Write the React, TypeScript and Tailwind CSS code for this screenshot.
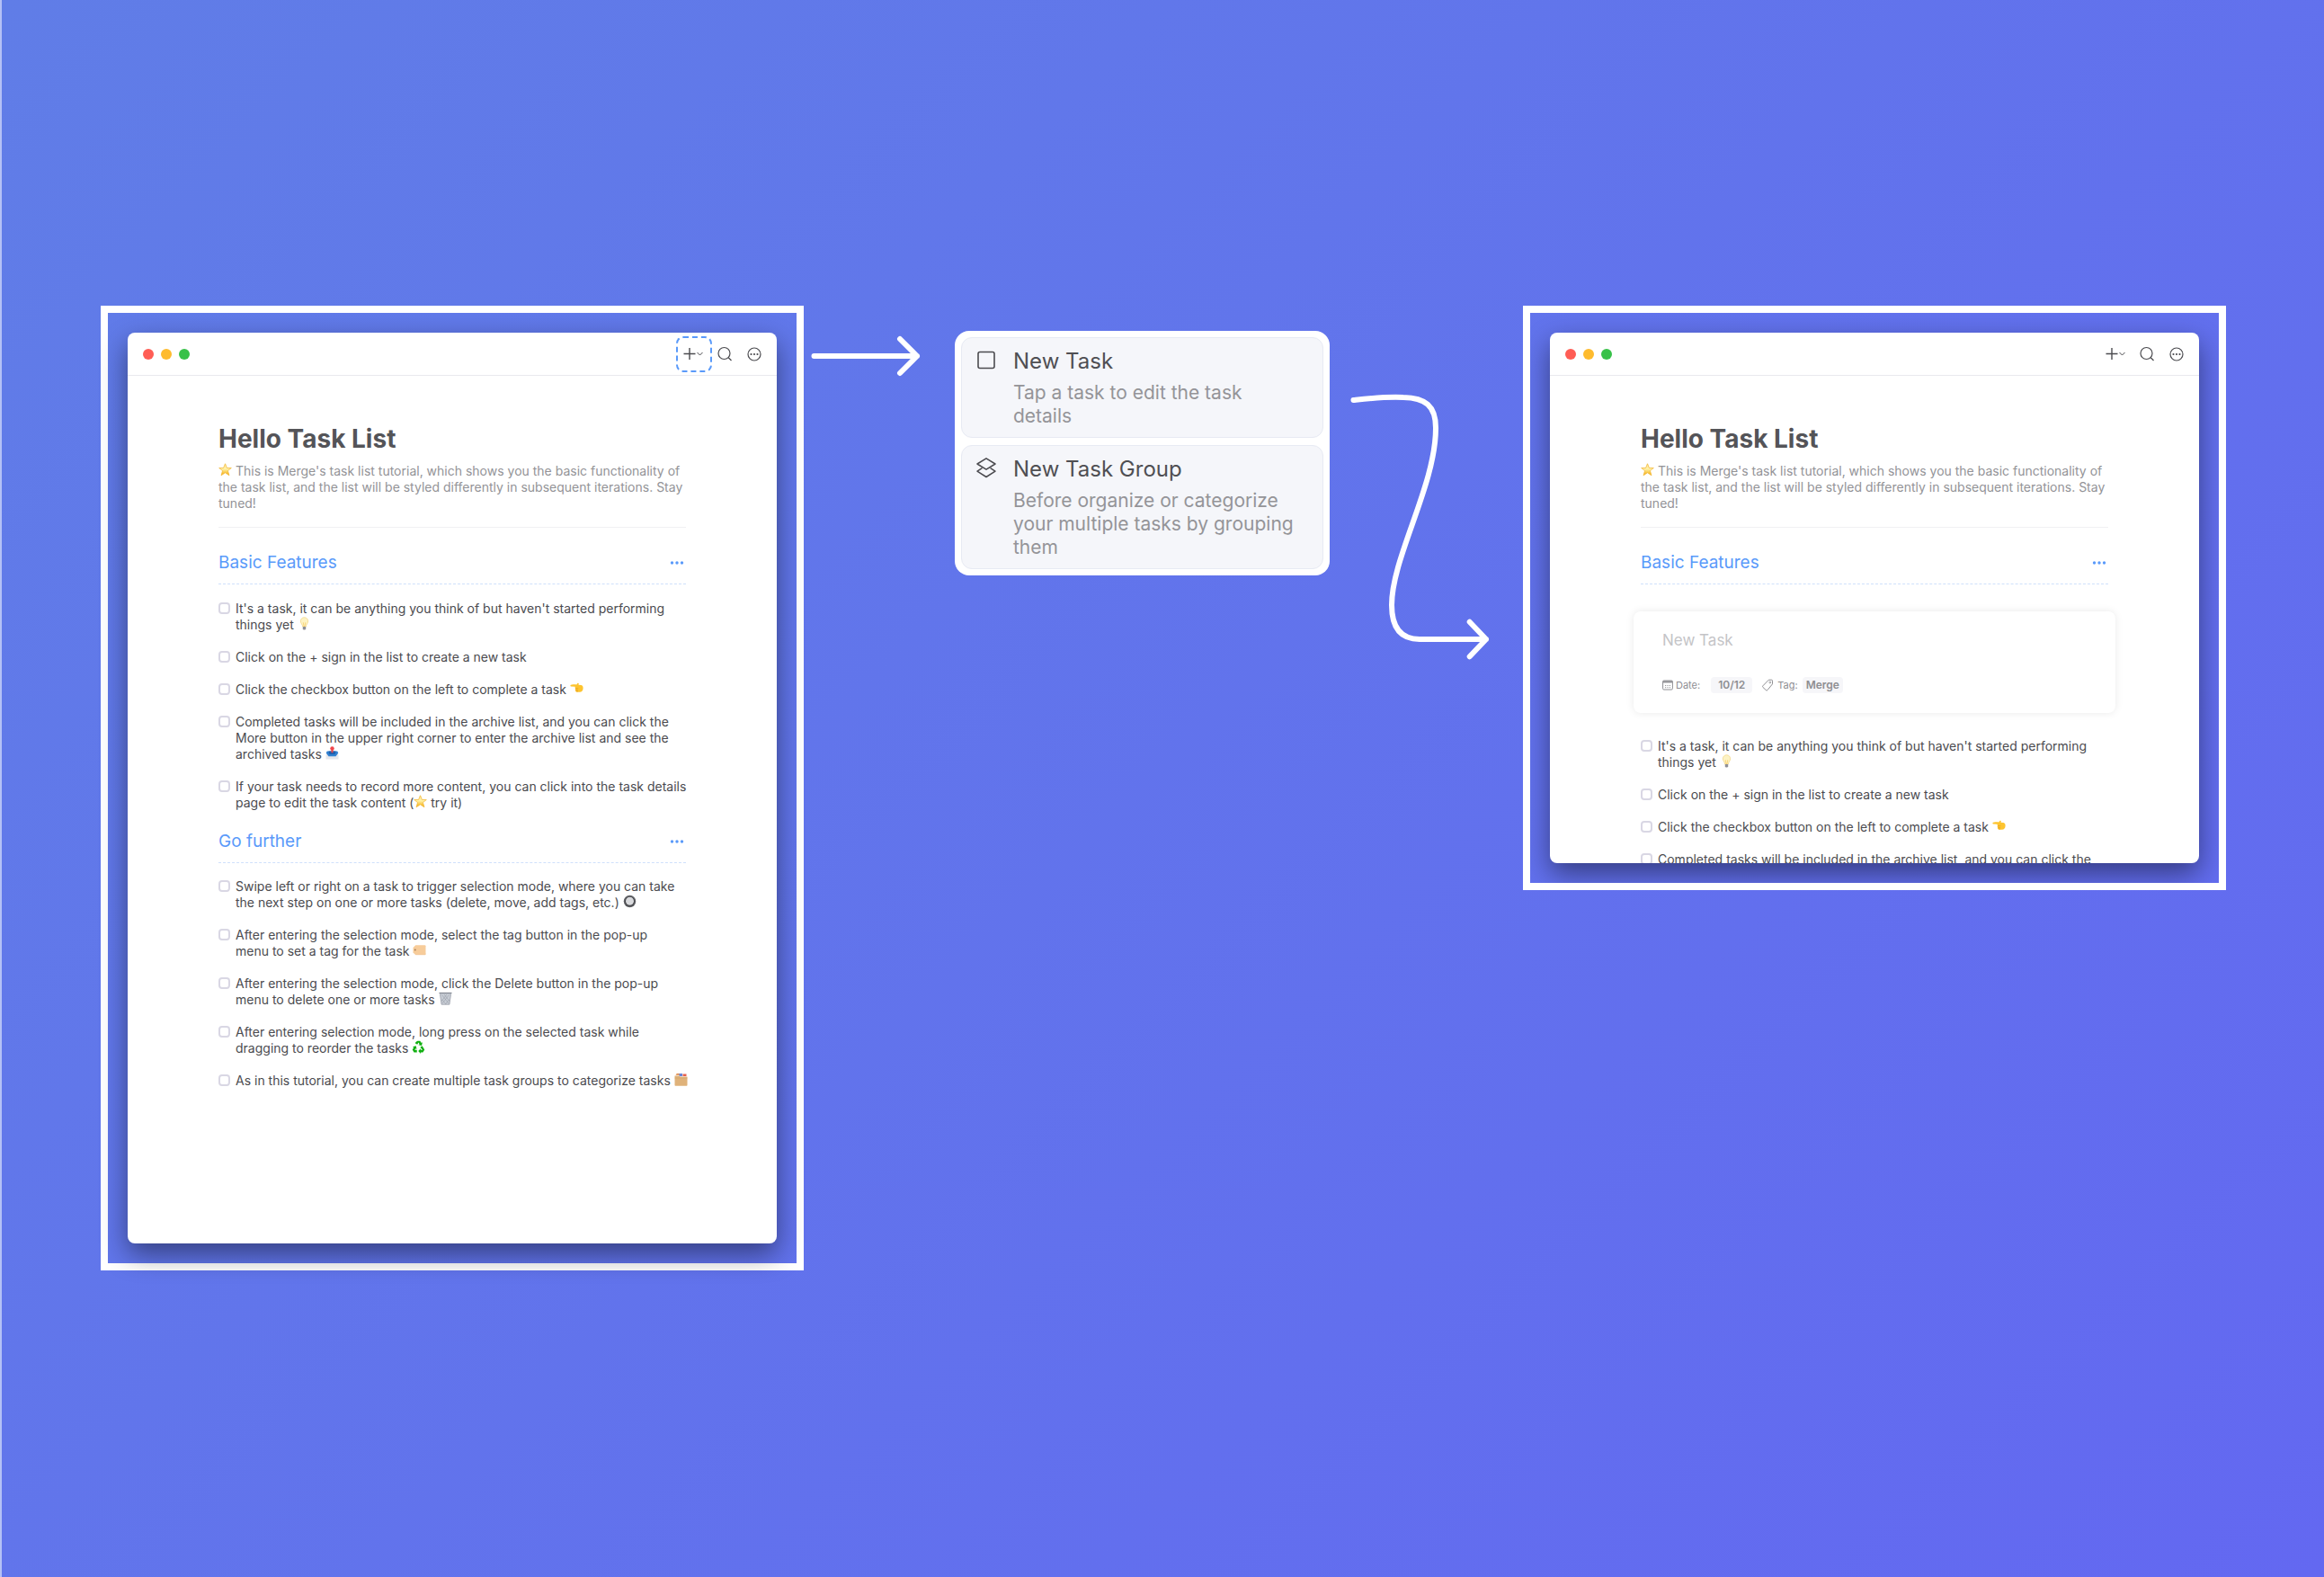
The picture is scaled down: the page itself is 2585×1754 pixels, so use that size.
import { useId, type ReactNode } from "react";

type GlyphName = "star" | "bulb" | "point" | "inbox" | "radio" | "label" | "bin" | "recycle" | "dividers";

const glyphLabels: Record<GlyphName, string> = {
  star: "⭐",
  bulb: "💡",
  point: "👈",
  inbox: "📥",
  radio: "🔘",
  label: "🏷️",
  bin: "🗑️",
  recycle: "♻️",
  dividers: "🗂️",
};

function GlyphShape({ name, id }: { name: GlyphName; id: string }) {
  switch (name) {
    case "star":
      return (
        <>
          <linearGradient id={id} x1="0" y1="0" x2="0" y2="1">
            <stop offset="0" stopColor="#ffe9a0" />
            <stop offset="0.45" stopColor="#fff1a6" />
            <stop offset="1" stopColor="#f5a800" />
          </linearGradient>
          <path
            d="M15 1.500 18.900 11h9.700l-7.700 6.200 3 10.300L15 21.600l-8.900 5.900 3-10.300L1.400 11h9.700z"
            fill={`url(#${id})`}
            stroke="#f3b93a"
            strokeWidth="1.6"
            strokeLinejoin="round"
          />
        </>
      );
    case "bulb":
      return (
        <>
          <path d="M15 1.500c5 0 8.300 3.700 8.300 8.300 0 5.200-4.300 6.700-4.600 12.200h-7.400C11 16.500 6.700 15 6.700 9.800 6.700 5.200 10 1.500 15 1.500z" fill="#fdf3c4" stroke="#f3d583" strokeWidth="1.5" />
          <path d="M12.500 12.500 14 21h2l1.500-8.500" fill="none" stroke="#f6c95e" strokeWidth="1.4" />
          <path d="M11.600 22h6.800v4.500L16.800 29h-3.600l-1.600-2.500z" fill="#8f9098" />
        </>
      );
    case "point":
      return (
        <>
          <path
            d="M2 7.500c6-1.200 9.500-1 12.500-.6l2-2.900c1.200-1.400 3.600-.5 3 1.700l-.6 1.700 6 .7c3 .6 4.300 3 4.300 6.500 0 5.800-2.800 9-7.700 9-4 0-7.300-.4-8.700-1.700-1.300-1.200-1-2.600-.4-3.400-1.200-1-1.300-2.600-.4-3.700-1-1-1-2.200-.4-3.100L2.300 11.200c-1.900-.3-1.900-3.400-.3-3.700z"
            fill="#fdc42f"
          />
          <path d="M12 15c2.800.6 5 .6 6.500 0M12.600 18.600c2.400.6 4 .5 5.400 0M13.500 21.800c1.800.4 3.300.3 4.500-.2" fill="none" stroke="#e39a1c" strokeWidth="1.3" />
        </>
      );
    case "inbox":
      return (
        <>
          <path d="M3 15 1 20v9h28v-9l-2-5z" fill="#e6e7ec" />
          <path d="M3.500 11h23l2 4-5.500 7.500H7L1.500 15z" fill="#2f7fd0" />
          <path d="M7 11h16l-2 7H9z" fill="#1c5fae" />
          <path d="M15 8v6.500" stroke="#e6474a" strokeWidth="4" />
          <circle cx="15" cy="5" r="4.500" fill="#f0474c" />
        </>
      );
    case "radio":
      return (
        <>
          <circle cx="15" cy="15" r="13.500" fill="#606165" />
          <circle cx="15" cy="15" r="10.500" fill="#3c3d40" />
          <circle cx="15" cy="14.500" r="9" fill="#d9dadd" />
        </>
      );
    case "label":
      return (
        <>
          <path d="M6.500 4.500H27a2 2 0 0 1 2 2v17a2 2 0 0 1-2 2H6.500L1 20V10z" fill="#f7cc9a" />
          <circle cx="5.500" cy="15" r="2" fill="#a9805a" />
          <path d="M1 20l5.500 5.500H27a2 2 0 0 0 2-2" fill="none" stroke="#efb87c" strokeWidth="1.2" />
        </>
      );
    case "bin":
      return (
        <>
          <path d="M2 2.500h26l-3.600 26H5.600z" fill="#c9ced6" />
          <path d="M7 7l15 19M12 6l12 15M8 18l8 10M23 7 8 26M18 6 6 21M22.500 18 15 28" stroke="#959ba5" strokeWidth="1.1" />
          <path d="M1 3h28" stroke="#858a94" strokeWidth="2.6" />
          <path d="m3 5 3.300 23.500h17.400L27 5" fill="none" stroke="#999ea8" strokeWidth="1.5" />
        </>
      );
    case "recycle":
      return (
        <g fill="#12b012">
          <path d="M9.500 3.500 13 1.500h5.500l3 4.500 2.500-1.400-2 7.400-7.300-1.600 2.600-1.600-2.300-3.600-2.600 4.300-5-2.900z" />
          <path d="M23.300 12.500 28.500 21l-3.700 6h-5v3L14.500 24l5.300-5.500v3h4l-5-6.200z" />
          <path d="M11.500 27H5L1.500 21l2.900-5L2 14.500l7.300-2 1.800 7.200-2.500-1.400-1.900 3.200h4.800z" />
        </g>
      );
    case "dividers":
      return (
        <>
          <path d="M3 5.500 5.500 2h6L13 5.500z" fill="#e08a4a" />
          <path d="M11 2h7v6h-7z" fill="#6b86d8" />
          <path d="M19 3h8v5h-8z" fill="#e4614f" />
          <path d="M1 7h10l2 2h16v19a1.500 1.500 0 0 1-1.500 1.500h-25A1.500 1.500 0 0 1 1 28z" fill="#dfb27a" />
          <path d="M1 12h28" stroke="#cc9c60" strokeWidth="1" />
        </>
      );
  }
}

function Glyph({ name }: { name: GlyphName }) {
  const id = useId();
  return (
    <svg viewBox="0 0 30 30" role="img" aria-label={glyphLabels[name]} className="inline-block size-[15px] align-[-1px]">
      <GlyphShape name={name} id={id} />
    </svg>
  );
}

function Task({ children }: { children: ReactNode }) {
  const id = useId();
  return (
    <li className="flex items-start gap-[6px]">
      <input
        id={id}
        type="checkbox"
        className="mt-[2px] size-[13px] shrink-0 appearance-none rounded-[4px] border-2 border-[#d9d7e4] bg-white checked:bg-[#5b9bfb]"
      />
      <label htmlFor={id} className="text-sm leading-[18px] text-[#4b4b4f]">
        {children}
      </label>
    </li>
  );
}

function GroupHeader({ title }: { title: string }) {
  return (
    <div className="flex items-center justify-between border-b border-dashed border-[#cfe0fb] pb-[9px]">
      <h2 className="text-[19px] leading-7 text-[#5a9afa]">{title}</h2>
      <button type="button" aria-label={`${title} options`} className="mr-[2px]">
        <svg viewBox="0 0 16 4" className="h-1 w-4 fill-[#5a9afa]">
          <circle cx="2.5" cy="2" r="1.7" />
          <circle cx="8" cy="2" r="1.7" />
          <circle cx="13.5" cy="2" r="1.7" />
        </svg>
      </button>
    </div>
  );
}

function BasicTasks({ preview }: { preview?: boolean }) {
  return (
    <ul className="-mr-2 flex flex-col gap-[18px]">
      <Task>
        It's a task, it can be anything you think of but haven't started performing things yet <Glyph name="bulb" />
      </Task>
      <Task>Click on the + sign in the list to create a new task</Task>
      <Task>
        Click the checkbox button on the left to complete a task <Glyph name="point" />
      </Task>
      <Task>
        Completed tasks will be included in the archive list, and you can click the{" "}
        {!preview && (
          <>
            More button in the upper right corner to enter the archive list and see the archived tasks{" "}
            <Glyph name="inbox" />
          </>
        )}
      </Task>
      {!preview && (
        <Task>
          If your task needs to record more content, you can click into the task details page to edit the task content (
          <Glyph name="star" /> try it)
        </Task>
      )}
    </ul>
  );
}

function FurtherTasks() {
  return (
    <ul className="-mr-2 flex flex-col gap-[18px]">
      <Task>
        Swipe left or right on a task to trigger selection mode, where you can take the next step on one or more tasks
        (delete, move, add tags, etc.) <Glyph name="radio" />
      </Task>
      <Task>
        After entering the selection mode, select the tag button in the pop-up
        <br />
        menu to set a tag for the task <Glyph name="label" />
      </Task>
      <Task>
        After entering the selection mode, click the Delete button in the pop-up
        <br />
        menu to delete one or more tasks <Glyph name="bin" />
      </Task>
      <Task>
        After entering selection mode, long press on the selected task while
        <br />
        dragging to reorder the tasks <Glyph name="recycle" />
      </Task>
      <Task>
        As in this tutorial, you can create multiple task groups to categorize tasks <Glyph name="dividers" />
      </Task>
    </ul>
  );
}

function TitleBar({ highlightAdd }: { highlightAdd?: boolean }) {
  return (
    <header className="flex h-12 items-center border-b border-[#e9e9ee] pr-4 pl-[17px]">
      <div className="flex flex-1 gap-2">
        <span className="size-3 rounded-full bg-[#ff5d55]" />
        <span className="size-3 rounded-full bg-[#febb2e]" />
        <span className="size-3 rounded-full bg-[#38c149]" />
      </div>
      <button
        type="button"
        aria-label="Add"
        className={
          highlightAdd
            ? "flex size-10 items-center justify-center rounded-lg border-2 border-dashed border-[#5a9afa]"
            : "flex size-10 items-center justify-center"
        }
      >
        <svg viewBox="0 0 24 16" className="h-4 w-6 shrink-0 fill-none stroke-[#4b4b4f]">
          <path d="M0.500 7.500h13M7 1v13" strokeWidth="1.4" />
          <path d="m15.500 6 3 3 3-3" strokeWidth="1" />
        </svg>
      </button>
      <button type="button" aria-label="Search" className="ml-[5px]">
        <svg viewBox="0 0 18 18" className="size-[18px] fill-none stroke-[#4b4b4f]">
          <circle cx="8.5" cy="8" r="6.5" strokeWidth="1.2" />
          <path d="m13 12.500 3.500 3.500" strokeWidth="1.2" />
        </svg>
      </button>
      <button type="button" aria-label="More" className="ml-[15px]">
        <svg viewBox="0 0 18 18" className="size-[18px] fill-none stroke-[#4b4b4f]">
          <circle cx="9" cy="9" r="7" strokeWidth="1.2" />
          <g fill="#4b4b4f" stroke="none">
            <circle cx="5.5" cy="9" r="1.1" />
            <circle cx="9" cy="9" r="1.1" />
            <circle cx="12.5" cy="9" r="1.1" />
          </g>
        </svg>
      </button>
    </header>
  );
}

function Intro() {
  return (
    <div className="border-b border-[#f0f0f3] pb-[17px]">
      <h1 className="text-[28px] leading-9 font-bold text-[#545458]">Hello Task List</h1>
      <p className="mt-[9px] text-sm leading-[18px] text-[#939397]">
        <Glyph name="star" /> This is Merge's task list tutorial, which shows you the basic functionality of the task
        list, and the list will be styled differently in subsequent iterations. Stay tuned!
      </p>
    </div>
  );
}

function NewTaskCard() {
  return (
    <form className="-mx-2 mt-[30px] rounded-lg bg-white px-8 pt-5 pb-[22px] shadow-[0_0_10px_rgba(0,0,0,0.09)]">
      <input
        aria-label="Task name"
        placeholder="New Task"
        className="block h-6 w-full text-[17px] leading-6 outline-none placeholder:text-[#c4c4c7]"
      />
      <div className="mt-[29px] flex items-center text-[11px] leading-[18px] text-[#8e8e92]">
        <svg viewBox="0 0 12 12" className="mr-[3px] size-3 fill-none stroke-[#8e8e92]">
          <rect x="0.6" y="1" width="10.8" height="10" rx="1.2" />
          <path d="M0.600 2.400h10.800" strokeWidth="2" />
          <path d="M3 6.500h6M3 8.700h6" strokeDasharray="1.200 1.200" strokeWidth="0.9" />
        </svg>
        Date:
        <button type="button" className="ml-3 rounded bg-[#f6f6f9] px-2 text-xs leading-[18px] font-semibold">
          10/12
        </button>
        <svg viewBox="0 0 12 14" className="ml-[11px] mr-[5px] h-[14px] w-3 fill-none stroke-[#8e8e92]">
          <path d="M7.300 1.200h3.200a1 1 0 0 1 1 1v3.600L6 12.500a1.200 1.200 0 0 1-1.700.1L.9 9.400a1.200 1.200 0 0 1 0-1.600z" />
          <circle cx="8.8" cy="4" r="0.9" strokeWidth="0.8" />
        </svg>
        Tag:
        <button type="button" className="ml-[5px] rounded bg-[#f6f6f9] px-1 text-xs leading-[18px] font-semibold">
          Merge
        </button>
      </div>
    </form>
  );
}

function FullList() {
  return (
    <section className="min-w-0 flex-1 border-8 border-white p-[22px]">
      <div className="rounded-lg bg-white shadow-[0_12px_30px_rgba(0,0,0,0.45)]">
        <TitleBar highlightAdd />
        <div className="px-[101px] pt-[52px] pb-[172px]">
          <Intro />
          <div className="mt-[25px] mb-[18px]">
            <GroupHeader title="Basic Features" />
          </div>
          <BasicTasks />
          <div className="mt-5 mb-[17px]">
            <GroupHeader title="Go further" />
          </div>
          <FurtherTasks />
        </div>
      </div>
    </section>
  );
}

function NewTaskList() {
  return (
    <section className="min-w-0 flex-1 overflow-hidden border-8 border-white p-[22px]">
      <div className="h-[590px] overflow-hidden rounded-lg bg-white shadow-[0_12px_30px_rgba(0,0,0,0.45)]">
        <TitleBar />
        <div className="px-[101px] pt-[52px]">
          <Intro />
          <div className="mt-[25px]">
            <GroupHeader title="Basic Features" />
          </div>
          <NewTaskCard />
          <div className="mt-7">
            <BasicTasks preview />
          </div>
        </div>
      </div>
    </section>
  );
}

function MenuItem({ icon, title, children }: { icon: ReactNode; title: string; children: ReactNode }) {
  return (
    <button
      type="button"
      className="flex items-start gap-[18px] rounded-xl border border-[#e7eaf3] bg-[#f5f6fa] pt-[10px] pr-5 pb-[10px] pl-[15px] text-left"
    >
      <svg viewBox="0 0 24 24" className="mt-[2px] size-6 shrink-0 fill-none stroke-[#4b4b4f]">
        {icon}
      </svg>
      <span>
        <span className="block text-2xl leading-8 text-[#4f4f53]">{title}</span>
        <span className="mt-[6px] block text-[21px] leading-[26px] text-[#949498]">{children}</span>
      </span>
    </button>
  );
}

function AddMenu() {
  return (
    <div className="mt-7 flex min-w-0 flex-1 flex-col gap-2 rounded-2xl bg-white p-[7px]">
      <MenuItem icon={<rect x="3" y="3.5" width="18" height="18" rx="2" strokeWidth="1.6" />} title="New Task">
        Tap a task to edit the task details
      </MenuItem>
      <MenuItem
        icon={
          <g strokeWidth="1.5" strokeLinejoin="round" strokeLinecap="round">
            <path d="M12 1.800 22 8l-10 6.200L2 8z" />
            <path d="M7 12.800 2 16.200l10 6.300 10-6.300-5-3.400" />
          </g>
        }
        title="New Task Group"
      >
        Before organize or categorize your multiple tasks by grouping them
      </MenuItem>
    </div>
  );
}

export default function App() {
  return (
    <main className="min-h-screen border-l-2 border-[#b4c1f6] bg-linear-135 from-[#607de7] to-[#6368f1] font-['Inter',sans-serif]">
      <div className="flex items-start pt-[340px] pr-[109px] pb-24 pl-[110px]">
        <FullList />
        <div className="flex w-[800px] shrink-0 items-start">
          <svg viewBox="0 0 168 100" className="h-[100px] w-[168px] shrink-0 fill-none stroke-white" aria-hidden="true">
            <path d="M11.500 56H126M107 37l19 19-19 19" strokeWidth="6" strokeLinecap="round" strokeLinejoin="round" />
          </svg>
          <AddMenu />
          <svg viewBox="0 0 215 410" className="h-[410px] w-[215px] shrink-0 fill-none stroke-white" aria-hidden="true">
            <path
              d="M26.500 105C45 103 62 101 82 102c24 .500 36 9 36 34 0 64-49 144-49 197 0 25 10 38 31 38h74M155.700 351.700 174 371l-18.300 19.300"
              strokeWidth="6"
              strokeLinecap="round"
              strokeLinejoin="round"
            />
          </svg>
        </div>
        <NewTaskList />
      </div>
    </main>
  );
}
